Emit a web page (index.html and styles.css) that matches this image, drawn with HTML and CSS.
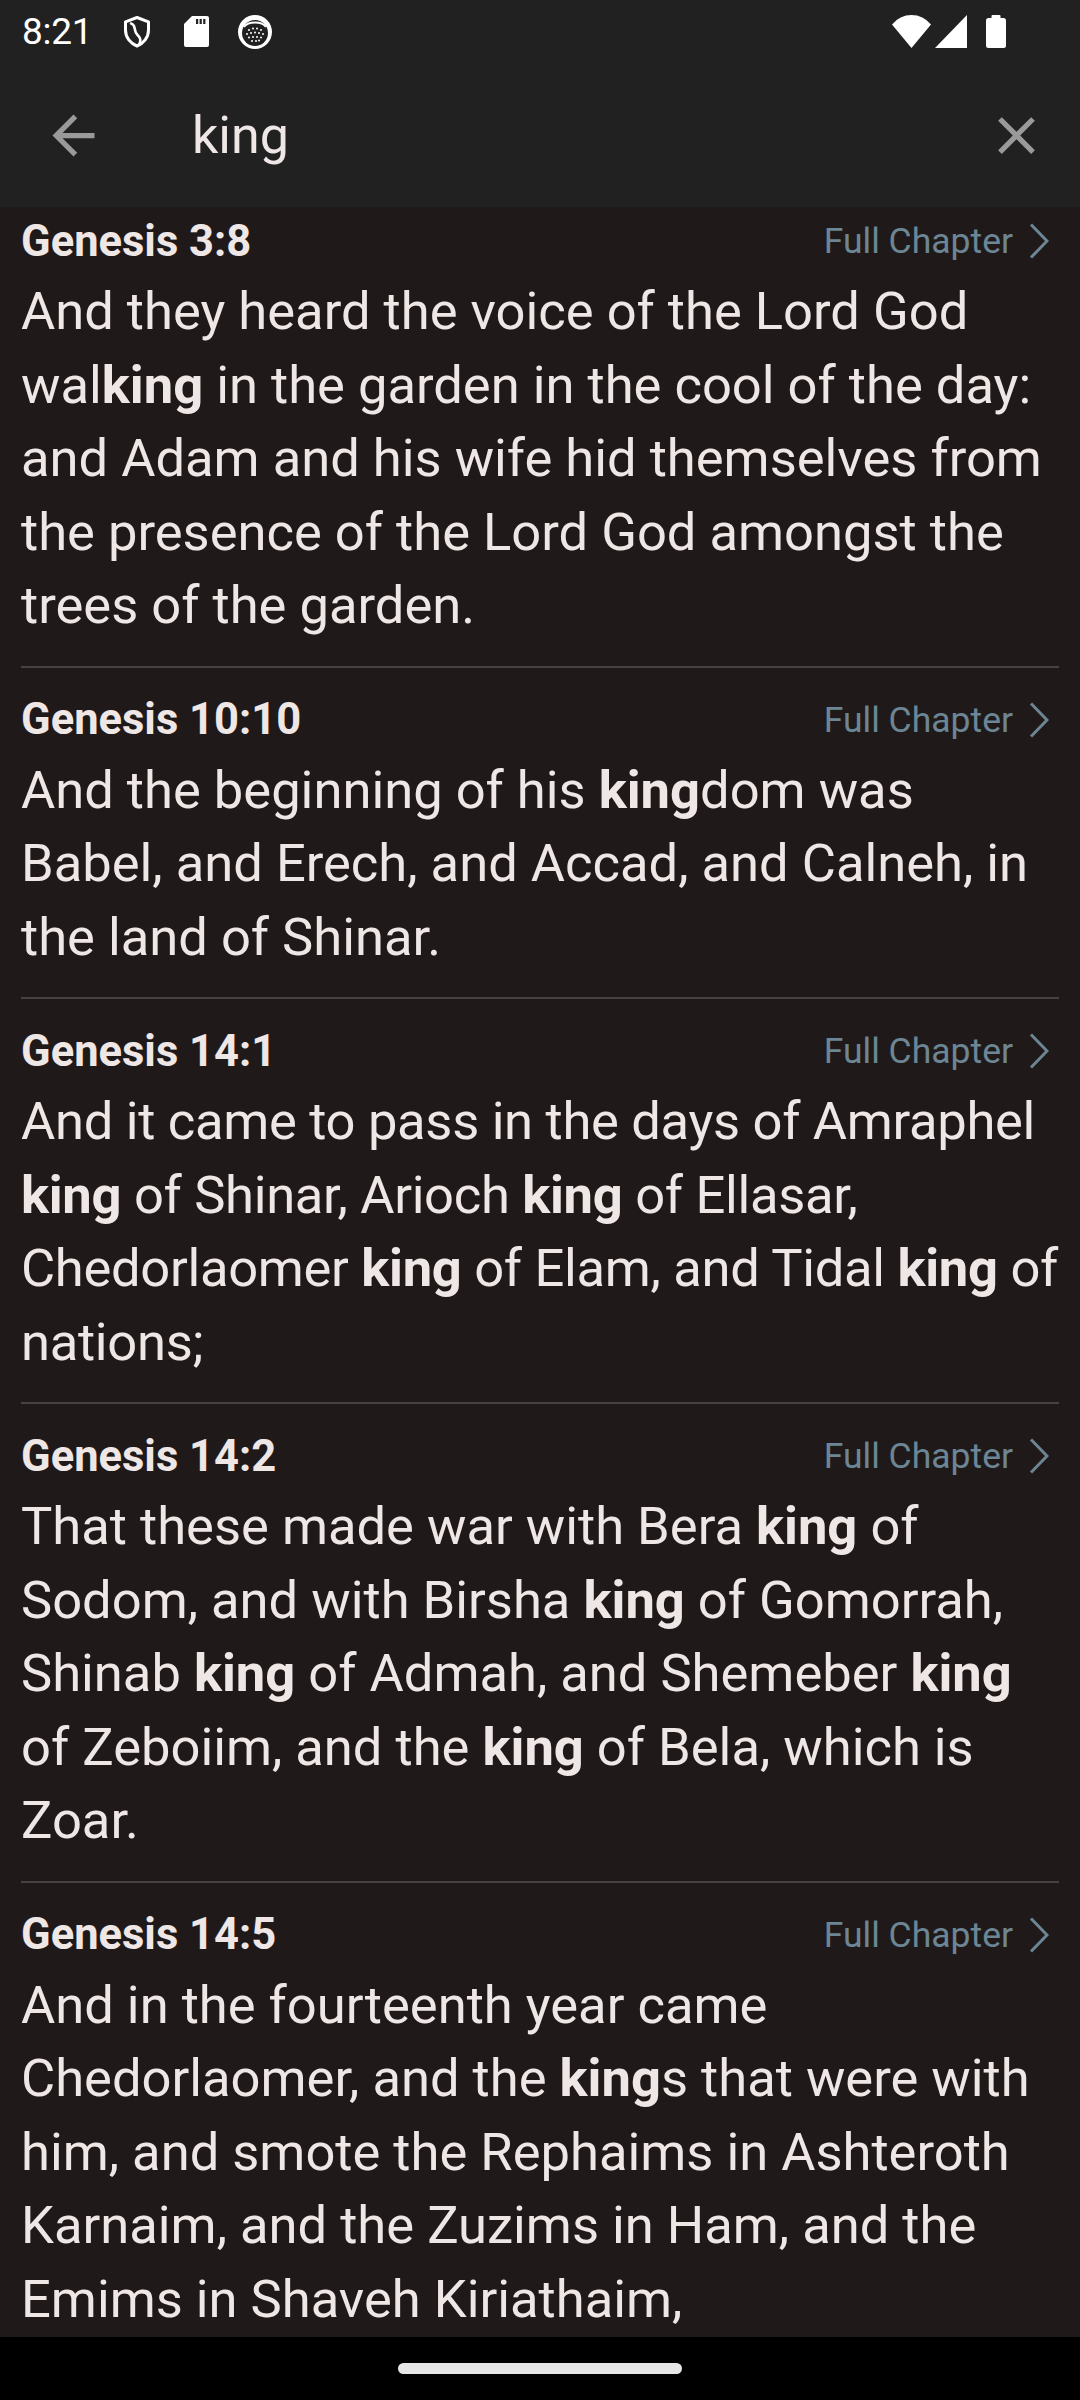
FILE: index.html
```html
<!DOCTYPE html>
<html lang="en">
<head>
<meta charset="utf-8">
<title>Search: king</title>
<link rel="stylesheet" href="styles.css">
</head>
<body>
<div class="screen">
  <div class="statusbar">
    <div class="sb-left">
      <span class="time">8:21</span>
      <svg class="sb-icon shield" viewBox="0 0 30 33" width="30" height="33">
        <path d="M15 2.5 L26.5 6.8 V15 C26.5 22.5 21.5 28.5 15 31 C8.5 28.5 3.5 22.5 3.5 15 V6.8 Z" fill="none" stroke="#fff" stroke-width="3" stroke-linejoin="round"/>
        <path d="M9 8.5 C14.5 9.5 11 16 15.5 20 C18.5 22.5 19.5 25.5 17 29.5" fill="none" stroke="#fff" stroke-width="2.6" stroke-linecap="round"/>
      </svg>
      <svg class="sb-icon sd" viewBox="0 0 25 31" width="25" height="31">
        <path d="M8 0 H23 A2 2 0 0 1 25 2 V29 A2 2 0 0 1 23 31 H2 A2 2 0 0 1 0 29 V8 Z" fill="#fff"/>
        <rect x="12" y="3" width="2.2" height="5" fill="#212121"/>
        <rect x="15.6" y="3" width="2.2" height="5" fill="#212121"/>
        <rect x="19.2" y="3" width="2.2" height="5" fill="#212121"/>
      </svg>
      <svg class="sb-icon cookie" viewBox="0 0 34 34" width="34" height="34">
        <circle cx="17" cy="17" r="17" fill="#fff"/>
        <circle cx="17" cy="18" r="13" fill="#212121"/>
        <path d="M6 12 C10 6 24 6 28 12" fill="none" stroke="#fff" stroke-width="2"/>
        <g fill="#fff">
          <circle cx="11" cy="15" r="1"/><circle cx="15" cy="13.5" r="1"/><circle cx="19" cy="13.5" r="1"/><circle cx="23" cy="15" r="1"/>
          <circle cx="9" cy="19" r="1"/><circle cx="13" cy="18" r="1"/><circle cx="17" cy="17.5" r="1"/><circle cx="21" cy="18" r="1"/><circle cx="25" cy="19" r="1"/>
          <circle cx="11" cy="22.5" r="1"/><circle cx="15" cy="22" r="1"/><circle cx="19" cy="22" r="1"/><circle cx="23" cy="22.5" r="1"/>
          <circle cx="14" cy="26" r="1"/><circle cx="18" cy="26" r="1"/><circle cx="21" cy="25.5" r="1"/>
        </g>
      </svg>
    </div>
    <div class="sb-right">
      <svg class="sb-icon" viewBox="0 0 39 33" width="39" height="33">
        <path d="M19.5 33 L0 9.5 A24.8 24.8 0 0 1 39 9.5 Z" fill="#fff"/>
      </svg>
      <svg class="sb-icon signal" viewBox="0 0 32 33" width="32" height="33">
        <path d="M32 0 V33 H0 Z" fill="#fff"/>
      </svg>
      <svg class="sb-icon battery" viewBox="0 0 20 33" width="20" height="33">
        <rect x="5.5" y="0" width="9" height="4" rx="1" fill="#fff"/>
        <rect x="0" y="3" width="20" height="30" rx="2.5" fill="#fff"/>
      </svg>
    </div>
  </div>

  <div class="appbar">
    <svg class="bar-icon" viewBox="0 0 24 24" width="63" height="63">
      <path d="M20 11H7.83l5.59-5.59L12 4l-8 8 8 8 1.41-1.41L7.83 13H20v-2z" fill="#9a9a9a"/>
    </svg>
    <div class="query">king</div>
    <svg class="bar-icon" viewBox="0 0 24 24" width="63" height="63">
      <path d="M19 6.41L17.59 5 12 10.59 6.41 5 5 6.41 10.59 12 5 17.59 6.41 19 12 13.41 17.59 19 19 17.59 13.41 12z" fill="#9a9a9a"/>
    </svg>
  </div>

  <div class="results">
    <div class="list">
      <div class="entry">
        <div class="entry-head">
          <span class="ref">Genesis 3:8</span>
          <span class="full">Full Chapter <svg class="chev" viewBox="0 0 20 36" width="20" height="36"><path d="M2 1.5 L18 18 L2 34.5" fill="none" stroke="#6c8695" stroke-width="3"/></svg></span>
        </div>
        <p class="verse">And they heard the voice of the Lord God wal<b class="hit">king</b> in the garden in the cool of the day: and Adam and his wife hid themselves from the presence of the Lord God amongst the trees of the garden.</p>
      </div>
      <div class="entry">
        <div class="entry-head">
          <span class="ref">Genesis 10:10</span>
          <span class="full">Full Chapter <svg class="chev" viewBox="0 0 20 36" width="20" height="36"><path d="M2 1.5 L18 18 L2 34.5" fill="none" stroke="#6c8695" stroke-width="3"/></svg></span>
        </div>
        <p class="verse">And the beginning of his <b class="hit">king</b>dom was Babel, and Erech, and Accad, and Calneh, in the land of Shinar.</p>
      </div>
      <div class="entry">
        <div class="entry-head">
          <span class="ref">Genesis 14:1</span>
          <span class="full">Full Chapter <svg class="chev" viewBox="0 0 20 36" width="20" height="36"><path d="M2 1.5 L18 18 L2 34.5" fill="none" stroke="#6c8695" stroke-width="3"/></svg></span>
        </div>
        <p class="verse verse-tight">And it came to pass in the days of Amraphel <b class="hit">king</b> of Shinar, Arioch <b class="hit">king</b> of Ellasar, Chedorlaomer <b class="hit">king</b> of Elam, and Tidal <b class="hit">king</b> of nations;</p>
      </div>
      <div class="entry">
        <div class="entry-head">
          <span class="ref">Genesis 14:2</span>
          <span class="full">Full Chapter <svg class="chev" viewBox="0 0 20 36" width="20" height="36"><path d="M2 1.5 L18 18 L2 34.5" fill="none" stroke="#6c8695" stroke-width="3"/></svg></span>
        </div>
        <p class="verse">That these made war with Bera <b class="hit">king</b> of Sodom, and with Birsha <b class="hit">king</b> of Gomorrah, Shinab <b class="hit">king</b> of Admah, and Shemeber <b class="hit">king</b> of Zeboiim, and the <b class="hit">king</b> of Bela, which is Zoar.</p>
      </div>
      <div class="entry">
        <div class="entry-head">
          <span class="ref">Genesis 14:5</span>
          <span class="full">Full Chapter <svg class="chev" viewBox="0 0 20 36" width="20" height="36"><path d="M2 1.5 L18 18 L2 34.5" fill="none" stroke="#6c8695" stroke-width="3"/></svg></span>
        </div>
        <p class="verse">And in the fourteenth year came Chedorlaomer, and the <b class="hit">king</b>s that were with him, and smote the Rephaims in Ashteroth Karnaim, and the Zuzims in Ham, and the Emims in Shaveh Kiriathaim,</p>
      </div>
    </div>
  </div>

  <div class="navbar">
    <div class="handle"></div>
  </div>
</div>
</body>
</html>
```

FILE: styles.css
```css
html, body {
  margin: 0;
  padding: 0;
  background: #000;
}

body {
  width: 1080px;
  height: 2400px;
  overflow: hidden;
  font-family: Roboto, "Noto Sans", "Liberation Sans", sans-serif;
}

.screen {
  display: flex;
  flex-direction: column;
  height: 2400px;
}

.statusbar {
  height: 63px;
  flex: none;
  background: #212121;
  display: flex;
  align-items: center;
  justify-content: space-between;
  padding: 0 74px 0 22px;
  box-sizing: border-box;
}

.sb-left,
.sb-right {
  display: flex;
  align-items: center;
}

.time {
  color: #fff;
  font-size: 37px;
  line-height: 1;
  margin-right: 30px;
  letter-spacing: -0.3px;
}

.sb-icon {
  display: block;
}

.shield { margin-right: 32px; }
.sd { margin-right: 29px; }

.signal { margin-left: 4px; }
.battery { margin-left: 19px; }

.appbar {
  height: 144px;
  flex: none;
  background: #212121;
  display: flex;
  align-items: center;
  padding: 0 32px 0 42px;
  box-sizing: border-box;
}

.bar-icon {
  display: block;
  flex: none;
}

.query {
  flex: 1;
  margin-left: 87px;
  color: #efe6e6;
  font-size: 52px;
}

.results {
  flex: 1;
  background: #1f1a19;
  overflow: hidden;
}

.list {
  margin-top: -18px;
  padding: 0 21px;
}

.entry {
  padding: 26px 0 23px;
  border-bottom: 2px solid #474242;
}

.entry-head {
  display: flex;
  align-items: center;
  justify-content: space-between;
  height: 52px;
  margin-bottom: 8px;
}

.ref {
  color: #efe6e6;
  font-weight: 700;
  font-size: 43.5px;
}

.full {
  display: flex;
  align-items: center;
  color: #6c8695;
  font-size: 35.5px;
  padding-right: 10px;
}

.chev {
  display: block;
  margin-left: 16px;
}

.verse {
  margin: 0 -3px 0 0;
  color: #efe6e6;
  font-size: 52.5px;
  line-height: 73.5px;
}

.verse-tight {
  letter-spacing: -0.3px;
}

.hit {
  font-weight: 700;
}

.navbar {
  height: 63px;
  flex: none;
  background: #000;
  display: flex;
  align-items: center;
  justify-content: center;
}

.handle {
  width: 284px;
  height: 11px;
  border-radius: 6px;
  background: #e6e6e6;
}
```
